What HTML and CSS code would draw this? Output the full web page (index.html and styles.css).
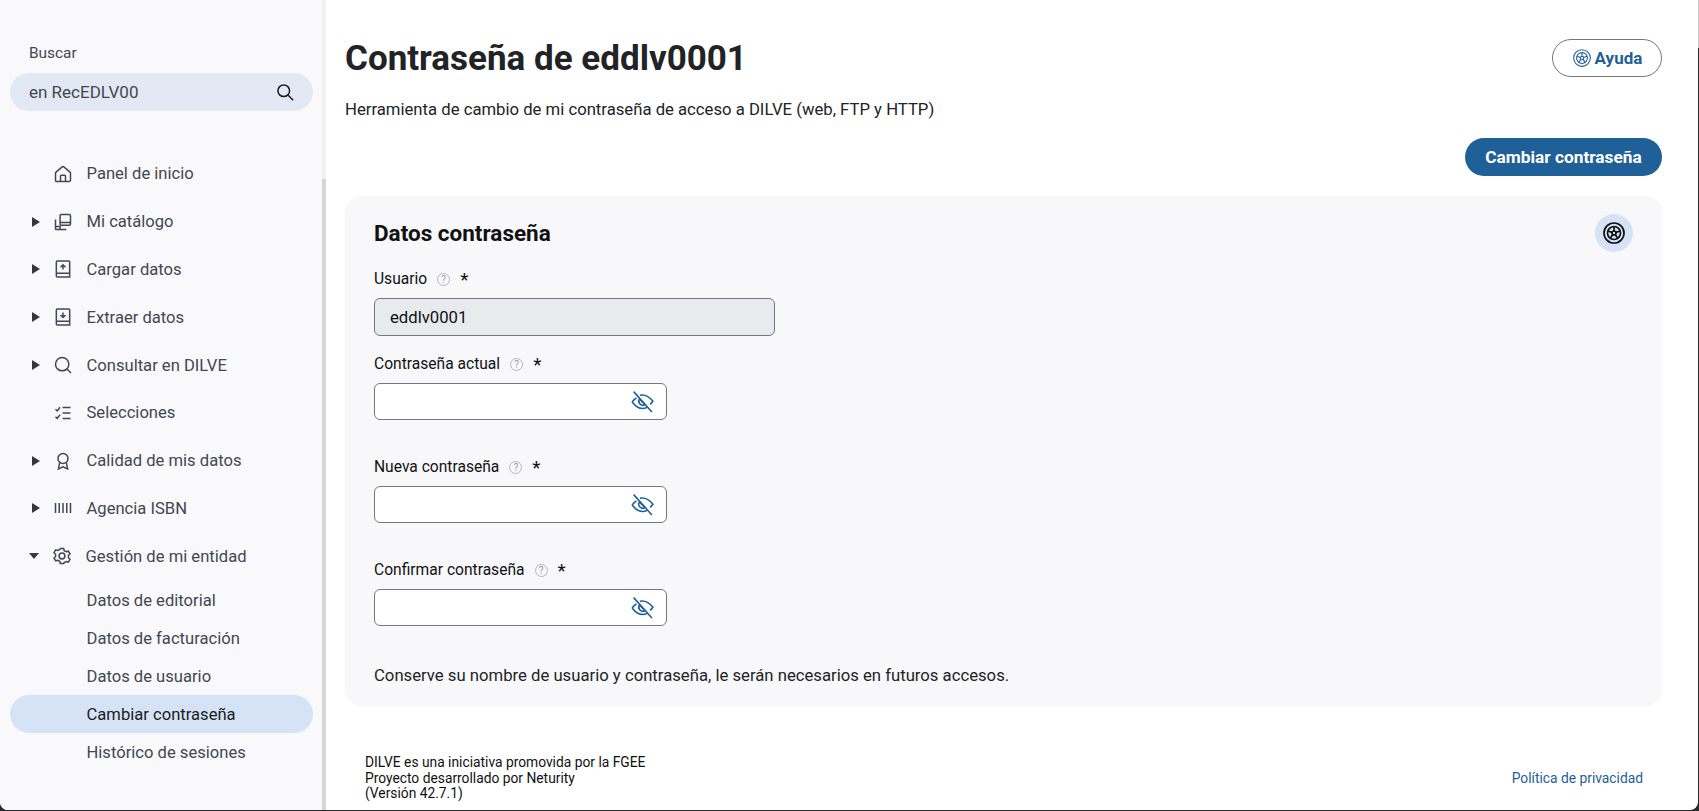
FILE: index.html
```html
<!DOCTYPE html>
<html lang="es">
<head>
    <meta charset="UTF-8">
    <meta name="viewport" content="width=device-width, initial-scale=1.0">
    <title>Contraseña de eddlv0001</title>
    <link rel="stylesheet" href="styles.css">
</head>
<body>
    <svg class="sprites" width="0" height="0">
        <symbol id="i-help" viewBox="0 0 24 24">
            <circle cx="12" cy="12" r="10"/><circle cx="12" cy="12" r="6.500"/><circle cx="12" cy="12" r="2"/>
            <path d="M12 5.500V10M5.800 10l4.300 1.400M18.200 10l-4.300 1.400M8.200 17.300l2.600-3.700M15.800 17.300l-2.600-3.700"/>
        </symbol>
        <symbol id="i-eye-off" viewBox="0 0 24 24">
            <path d="M2 12.500c1.200-1.600 2.600-3 4.200-4M9.500 6c.8-.2 1.700-.3 2.500-.3 3.800 0 7 2.300 10 6-.8 1.100-1.700 2.100-2.700 3"/>
            <path d="M2 12.500c3 3.800 6.200 6.300 10 6.300 1.600 0 3-.4 4.400-1.200"/>
            <path d="M9 9.500a4 4 0 0 0 5.500 5.500z" class="solid"/>
            <path d="M3.500 2.500l17.500 19.500"/>
        </symbol>
    </svg>

    <div class="app">
        <aside class="sidebar">
            <div class="search">
                <label class="search-label" for="search-input">Buscar</label>
                <div class="search-box">
                    <input id="search-input" class="search-input" type="text" value="en RecEDLV00">
                    <svg class="search-icon" viewBox="0 0 24 24"><circle cx="10.500" cy="10.500" r="7"/><path d="m15.800 15.800 6 6"/></svg>
                </div>
            </div>

            <nav class="nav">
                <a class="nav-item">
                    <span class="caret"></span>
                    <svg class="nav-icon" viewBox="0 0 24 24"><path d="M3 19.500V11q0-.8.6-1.300l7.400-6.300q1-.8 2 0l7.400 6.300q.6.500.6 1.300v8.500q0 1.500-1.500 1.500h-15Q3 21 3 19.500z"/><path d="M9 21v-6.500a1 1 0 0 1 1-1h4a1 1 0 0 1 1 1V21"/></svg>
                    <span>Panel de inicio</span>
                </a>
                <a class="nav-item">
                    <span class="caret right"></span>
                    <svg class="nav-icon" viewBox="0 0 24 24"><rect x="8.500" y="3" width="12.500" height="13" rx="1.500"/><path d="M8.500 12.500H21M3 9v11a1 1 0 0 0 1 1h12M3 17.500h5.500V21"/></svg>
                    <span>Mi catálogo</span>
                </a>
                <a class="nav-item">
                    <span class="caret right"></span>
                    <svg class="nav-icon" viewBox="0 0 24 24"><path d="M4 17V3.500a1 1 0 0 1 1-1h14a1 1 0 0 1 1 1V21.500H5a1 1 0 0 1-1-1V18a1 1 0 0 1 1-1h15"/><path d="M12 12.500V7M9 10l3-3 3 3"/></svg>
                    <span>Cargar datos</span>
                </a>
                <a class="nav-item">
                    <span class="caret right"></span>
                    <svg class="nav-icon" viewBox="0 0 24 24"><path d="M4 17V3.500a1 1 0 0 1 1-1h14a1 1 0 0 1 1 1V21.500H5a1 1 0 0 1-1-1V18a1 1 0 0 1 1-1h15"/><path d="M12 6.500V12M9 9.500l3 3 3-3"/></svg>
                    <span>Extraer datos</span>
                </a>
                <a class="nav-item">
                    <span class="caret right"></span>
                    <svg class="nav-icon" viewBox="0 0 24 24"><circle cx="11" cy="11" r="8"/><path d="m16.800 16.800 4.700 4.700"/></svg>
                    <span>Consultar en DILVE</span>
                </a>
                <a class="nav-item">
                    <span class="caret"></span>
                    <svg class="nav-icon" viewBox="0 0 24 24"><path d="m3 7.500 2 2 3.500-4.500M3 16.500l2 2 3.500-4.500M11.500 5.500H21M11.500 12H21M11.500 18.500H21"/></svg>
                    <span>Selecciones</span>
                </a>
                <a class="nav-item">
                    <span class="caret right"></span>
                    <svg class="nav-icon" viewBox="0 0 24 24"><circle cx="12" cy="9" r="6"/><path d="m8 14-1.500 7.500 5.500-2.500 5.500 2.500L16 14"/></svg>
                    <span>Calidad de mis datos</span>
                </a>
                <a class="nav-item">
                    <span class="caret right"></span>
                    <svg class="nav-icon" viewBox="0 0 24 24"><path d="M3 6v12M7.500 6v12M12 6v12M16.500 6v12M21 6v12"/></svg>
                    <span>Agencia ISBN</span>
                </a>
                <a class="nav-item">
                    <span class="caret down"></span>
                    <svg class="nav-icon" viewBox="0 0 24 24"><path d="M10 3h4l.7 2.600 2.300 1.300 2.600-.7 2 3.400-1.900 1.900v2.600l1.900 1.900-2 3.400-2.600-.7-2.300 1.300L14 21h-4l-.7-2.600L7 17.100l-2.600.7-2-3.400 1.900-1.900V9.900L2.400 8l2-3.400 2.600.7 2.300-1.300z"/><circle cx="12" cy="12" r="3.500"/></svg>
                    <span>Gestión de mi entidad</span>
                </a>
                <div class="subnav">
                    <a class="sub-item">Datos de editorial</a>
                    <a class="sub-item">Datos de facturación</a>
                    <a class="sub-item">Datos de usuario</a>
                    <a class="sub-item active">Cambiar contraseña</a>
                    <a class="sub-item">Histórico de sesiones</a>
                </div>
            </nav>
        </aside>
        <div class="scrollbar"><div class="scrollbar-thumb"></div></div>

        <main class="main">
            <header class="page-head">
                <h1>Contraseña de eddlv0001</h1>
                <button class="help-btn"><svg class="ring"><use href="#i-help"/></svg>Ayuda</button>
            </header>
            <p class="subtitle">Herramienta de cambio de mi contraseña de acceso a DILVE (web, FTP y HTTP)</p>
            <div class="actions">
                <button class="primary-btn">Cambiar contraseña</button>
            </div>

            <section class="card">
                <div class="card-head">
                    <h2>Datos contraseña</h2>
                    <span class="card-help"><svg class="ring"><use href="#i-help"/></svg></span>
                </div>

                <div class="field field-user">
                    <label class="field-label">Usuario <span class="hint">?</span> <span class="req">*</span></label>
                    <input class="text-input readonly" type="text" value="eddlv0001" readonly>
                </div>
                <div class="field">
                    <label class="field-label">Contraseña actual <span class="hint">?</span> <span class="req">*</span></label>
                    <div class="pass-box"><input class="text-input" type="password"><svg class="eye"><use href="#i-eye-off"/></svg></div>
                </div>
                <div class="field">
                    <label class="field-label">Nueva contraseña <span class="hint">?</span> <span class="req">*</span></label>
                    <div class="pass-box"><input class="text-input" type="password"><svg class="eye"><use href="#i-eye-off"/></svg></div>
                </div>
                <div class="field">
                    <label class="field-label">Confirmar contraseña <span class="hint">?</span> <span class="req">*</span></label>
                    <div class="pass-box"><input class="text-input" type="password"><svg class="eye"><use href="#i-eye-off"/></svg></div>
                </div>

                <p class="note">Conserve su nombre de usuario y contraseña, le serán necesarios en futuros accesos.</p>
            </section>

            <footer class="footer">
                <div class="footer-text">
                    DILVE es una iniciativa promovida por la FGEE<br>
                    Proyecto desarrollado por Neturity<br>
                    (Versión 42.7.1)
                </div>
                <a class="footer-link">Política de privacidad</a>
            </footer>
        </main>
    </div>
    <div class="edge-top"></div>
</body>
</html>
```

FILE: styles.css
```css
html, body {
    margin: 0;
    height: 100%;
    overflow: hidden;
}

body {
    font-family: Roboto, "Liberation Sans", sans-serif;
    color: #1a1c1e;
    background: #2a2a2a;
}

.sprites {
    display: block;
    height: 0;
}

.app {
    display: flex;
    height: 810px;
    margin-right: 1px;
    overflow: hidden;
    border-radius: 0 0 8px 8px;
    background: #fff;
}

/* light end of the window edge, above the dark part */
.edge-top {
    position: absolute;
    top: 0;
    right: 0;
    width: 1px;
    height: 48px;
    background: #c8c8c8;
}

.sidebar {
    width: 322px;
    flex: none;
    background: #f9f9fc;
    padding: 45px 9px 0 10px;
    box-sizing: border-box;
}

.scrollbar {
    width: 4px;
    flex: none;
    background: #f1f1f1;
    padding-top: 179px;
    box-sizing: border-box;
}

.scrollbar-thumb {
    height: 100%;
    background: #d6d6d6;
}

/* search */
.search-label {
    display: block;
    font-size: 15.400px;
    line-height: 17px;
    color: #43474e;
    padding-left: 19px;
    margin-bottom: 11px;
}

.search-box {
    display: flex;
    align-items: center;
    height: 38px;
    border-radius: 19px;
    background: #e3e9f4;
    padding: 0 18px 0 19px;
}

.search-input {
    flex: 1;
    min-width: 0;
    border: none;
    background: none;
    outline: none;
    padding: 0;
    font: 17px Roboto, sans-serif;
    color: #43474e;
}

.search-icon {
    width: 20px;
    height: 20px;
    fill: none;
    stroke: #1a1c1e;
    stroke-width: 1.800;
}

/* nav */
.nav {
    margin-top: 39px;
}

.nav-item {
    display: flex;
    align-items: center;
    height: 47.800px;
    padding-left: 22px;
    font-size: 16.600px;
    color: #43474e;
}

.caret {
    width: 8px;
    height: 10px;
    flex: none;
    margin-right: 13px;
}

.caret.right {
    width: 0;
    height: 0;
    border-style: solid;
    border-width: 5.500px 0 5.500px 8px;
    border-color: transparent transparent transparent #35393f;
}

.caret.down {
    width: 0;
    height: 0;
    border-style: solid;
    border-width: 6px 5.500px 0;
    border-color: #35393f transparent transparent;
    margin-left: -3px;
}

.nav-icon {
    width: 20px;
    height: 20px;
    flex: none;
    margin-right: 13.500px;
    fill: none;
    stroke: #43474e;
    stroke-width: 1.800;
}

.subnav {
    margin-top: 1px;
}

.sub-item {
    display: flex;
    align-items: center;
    height: 38px;
    padding-left: 76.500px;
    font-size: 16.600px;
    color: #43474e;
}

.sub-item.active {
    background: #d6e3f7;
    color: #1a1c1e;
    border-radius: 19px;
}

/* main column */
.main {
    flex: 1;
    min-width: 0;
    padding: 39px 36px 0 19px;
    box-sizing: border-box;
}

.page-head {
    display: flex;
    justify-content: space-between;
    align-items: flex-start;
}

.page-head h1 {
    margin: 0;
    font-size: 35px;
    line-height: 40px;
    font-weight: 700;
    color: #212326;
}

.help-btn {
    display: flex;
    align-items: center;
    justify-content: center;
    gap: 3px;
    width: 110px;
    height: 38px;
    border: 1px solid #73777f;
    border-radius: 19px;
    background: #fff;
    font: 700 17px Roboto, sans-serif;
    color: #1f6099;
    padding: 0;
}

.ring {
    width: 20px;
    height: 20px;
    fill: none;
    stroke: currentColor;
    stroke-width: 1.300;
}

.subtitle {
    margin: 20px 0 0;
    font-size: 16.700px;
    line-height: 21px;
    color: #212326;
}

.actions {
    display: flex;
    justify-content: flex-end;
    margin-top: 18px;
}

.primary-btn {
    width: 197px;
    height: 38px;
    border: none;
    border-radius: 19px;
    background: #1f6099;
    color: #fff;
    font: 700 17.300px Roboto, sans-serif;
    padding: 0;
}

/* card */
.card {
    margin-top: 20px;
    height: 510px;
    box-sizing: border-box;
    background: #f8f8fb;
    border-radius: 16px;
    padding: 18px 29px 0;
}

.card-head {
    display: flex;
    justify-content: space-between;
    align-items: center;
    height: 38px;
    margin-bottom: 1px;
}

.card-help {
    display: flex;
    align-items: center;
    justify-content: center;
    width: 38px;
    height: 38px;
    border-radius: 50%;
    background: #d6e3f7;
    color: #111;
}

.card-head h2 {
    margin: 0;
    font-size: 22.500px;
    font-weight: 700;
    color: #111;
}

.card-help .ring {
    width: 24px;
    height: 24px;
    stroke-width: 1.700;
}

.field {
    width: 293px;
    margin-bottom: 37px;
}

.field-user {
    width: 401px;
    margin-top: 17px;
    margin-bottom: 18px;
}

.field-label {
    display: flex;
    align-items: center;
    height: 20px;
    margin-bottom: 9px;
    font-size: 15.600px;
    font-weight: 400;
    color: #111;
}

.hint {
    display: inline-flex;
    flex: none;
    align-items: center;
    justify-content: center;
    width: 11px;
    height: 11px;
    margin: 1px 10px 0 10px;
    border: 1.500px solid #b5b7bc;
    border-radius: 50%;
    font-size: 10px;
    color: #9a9ca1;
}

.req {
    font-size: 19px;
}

.text-input {
    display: block;
    width: 100%;
    height: 37px;
    box-sizing: border-box;
    border: 1px solid #73777f;
    border-radius: 6px;
    background: #fff;
    padding: 0 15px;
    font: 16.700px Roboto, sans-serif;
    color: #111;
    outline: none;
}

.text-input.readonly {
    height: 38px;
    background: #e8ebee;
}

.pass-box {
    position: relative;
}

.eye {
    position: absolute;
    right: 12px;
    top: 6px;
    width: 25px;
    height: 25px;
    fill: none;
    stroke: #1f6099;
    stroke-width: 1.500;
}

.note {
    margin: 0;
    padding-top: 1.500px;
    font-size: 16.700px;
    line-height: 21px;
    color: #212326;
}

/* footer */
.footer {
    display: flex;
    justify-content: space-between;
    align-items: center;
    margin-top: 49px;
    padding: 0 19px 0 20px;
    font-size: 13.800px;
    line-height: 15.500px;
    color: #111;
}

.footer-link {
    color: #1f6099;
}
```
